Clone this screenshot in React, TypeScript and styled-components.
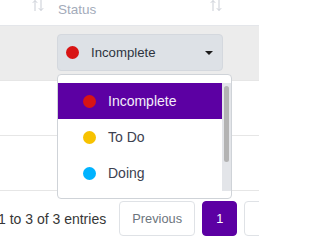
import React, { FC } from 'react';
import styled, { createGlobalStyle } from 'styled-components';

const GlobalStyle = createGlobalStyle`
  html, body {
    margin: 0;
    padding: 0;
    background: #ffffff;
  }

  body {
    font-family: 'Liberation Sans', Arial, sans-serif;
    color: #333333;
  }

  #root {
    width: 259px;
    height: 243px;
    overflow: hidden;
  }
`;

const Page = styled.div`
  width: 259px;
  height: 243px;
  overflow: hidden;
`;

const Table = styled.div`
  display: grid;
  grid-template-columns: 51px 178px 1fr;
`;

const HeadCell = styled.div<{ $label?: boolean }>`
  height: 26px;
  box-sizing: border-box;
  border-bottom: 1px solid #e4e6ea;
  display: flex;
  align-items: flex-start;
  justify-content: ${p => (p.$label ? 'space-between' : 'flex-end')};
  padding: 2px 7px 0 ${p => (p.$label ? '7px' : '0')};
  font-size: 13.5px;
  line-height: 16px;
  color: #a3abba;
`;

const SortIconWrap = styled.span`
  display: block;
  margin-top: -3px;
  width: 12px;
  height: 13px;
  color: #c9cdd5;
`;

const Cell = styled.div<{ $active?: boolean; $relative?: boolean }>`
  height: 55px;
  box-sizing: border-box;
  border-bottom: 1px solid #e6e6e6;
  background: ${p => (p.$active ? '#ececec' : '#ffffff')};
  padding: 8px 0 0 6px;
  position: ${p => (p.$relative ? 'relative' : 'static')};
`;

const StatusSelect = styled.div`
  width: 166px;
  height: 37px;
  box-sizing: border-box;
  border: 1px solid #d4d8de;
  border-radius: 4px;
  background: #dde1e6;
  display: flex;
  align-items: center;
  padding: 0 9px 0 8px;
  font-size: 13.2px;
  color: #2d3440;
`;

const Dot = styled.span<{ $color: string }>`
  flex: none;
  width: 13px;
  height: 13px;
  border-radius: 50%;
  background: ${p => p.$color};
`;

const SelectLabel = styled.span`
  flex: 1;
  margin-left: 12px;
`;

const Caret = styled.span`
  width: 0;
  height: 0;
  border-left: 4px solid transparent;
  border-right: 4px solid transparent;
  border-top: 4px solid #1c1c1c;
`;

const Menu = styled.div`
  position: absolute;
  left: 6px;
  top: 48px;
  z-index: 5;
  width: 175px;
  box-sizing: border-box;
  border: 1px solid #cfd3d8;
  border-radius: 4px;
  background: #ffffff;
  padding: 8px 0 7px;
`;

const MenuBody = styled.div`
  display: flex;
  height: 108px;
`;

const MenuList = styled.div`
  flex: 1;
  overflow: hidden;
`;

const ScrollTrack = styled.div`
  flex: none;
  width: 9px;
  background: #e3e5e9;
  padding: 3px 2px;
  box-sizing: border-box;
`;

const ScrollThumb = styled.div`
  width: 5px;
  border-radius: 3px;
  background: #b3b3b3;
`;

const MenuItem = styled.div<{ $selected?: boolean }>`
  height: 36px;
  display: flex;
  align-items: center;
  padding-left: 25px;
  font-size: 14px;
  background: ${p => (p.$selected ? '#5c00a3' : '#ffffff')};
  color: ${p => (p.$selected ? '#f4eefa' : '#3c4150')};
`;

const ItemLabel = styled.span`
  margin-left: 12px;
`;

const Footer = styled.div`
  display: flex;
  align-items: center;
  margin: 10px 0 0 -2px;
`;

const Info = styled.div`
  font-size: 14px;
  line-height: 16px;
  color: #373737;
  white-space: nowrap;
`;

const Pager = styled.div`
  display: flex;
  gap: 7px;
  margin-left: 13px;
`;

const PageButton = styled.button<{ $active?: boolean; $width: number }>`
  flex: none;
  width: ${p => p.$width}px;
  height: 35px;
  box-sizing: border-box;
  border: 1px solid ${p => (p.$active ? '#5c00a3' : '#dfe2e6')};
  border-radius: 4px;
  background: ${p => (p.$active ? '#5c00a3' : '#ffffff')};
  color: ${p => (p.$active ? '#ffffff' : '#6c757d')};
  font-family: 'Liberation Sans', Arial, sans-serif;
  font-size: 12.8px;
  padding: 0;
`;

const SortIcon: FC = () => (
  <SortIconWrap>
    <svg width="12" height="13" viewBox="0 0 12 13" fill="none" stroke="currentColor" strokeWidth="1">
      <path d="M3 12V1.5M0.8 3.8L3 1.5l2.2 2.3" />
      <path d="M9 1v10.5M6.8 9.2L9 11.5l2.2-2.3" />
    </svg>
  </SortIconWrap>
);

const statuses = [
  { label: 'Incomplete', color: '#d81414' },
  { label: 'To Do', color: '#f7c200' },
  { label: 'Doing', color: '#00b3ff' },
  { label: 'Done', color: '#1fb14a' },
];

const VISIBLE_HEIGHT = 108;
const ITEM_HEIGHT = 36;

const App: FC = () => {
  const thumbHeight = Math.round(
    ((VISIBLE_HEIGHT - 6) * VISIBLE_HEIGHT) / (statuses.length * ITEM_HEIGHT) - 1,
  );

  return (
    <Page>
      <GlobalStyle />
      <Table>
        <HeadCell>
          <SortIcon />
        </HeadCell>
        <HeadCell $label>
          <span>Status</span>
          <SortIcon />
        </HeadCell>
        <HeadCell />

        <Cell $active />
        <Cell $active $relative>
          <StatusSelect>
            <Dot $color="#d81414" />
            <SelectLabel>Incomplete</SelectLabel>
            <Caret />
          </StatusSelect>
          <Menu>
            <MenuBody>
              <MenuList>
                {statuses.map((s, i) => (
                  <MenuItem key={s.label} $selected={i === 0}>
                    <Dot $color={s.color} />
                    <ItemLabel>{s.label}</ItemLabel>
                  </MenuItem>
                ))}
              </MenuList>
              <ScrollTrack>
                <ScrollThumb style={{ height: thumbHeight }} />
              </ScrollTrack>
            </MenuBody>
          </Menu>
        </Cell>
        <Cell $active />

        <Cell />
        <Cell />
        <Cell />

        <Cell />
        <Cell />
        <Cell />
      </Table>
      <Footer>
        <Info>1 to 3 of 3 entries</Info>
        <Pager>
          <PageButton $width={76}>Previous</PageButton>
          <PageButton $width={35} $active>
            1
          </PageButton>
          <PageButton $width={60}>Next</PageButton>
        </Pager>
      </Footer>
    </Page>
  );
};

export default App;
